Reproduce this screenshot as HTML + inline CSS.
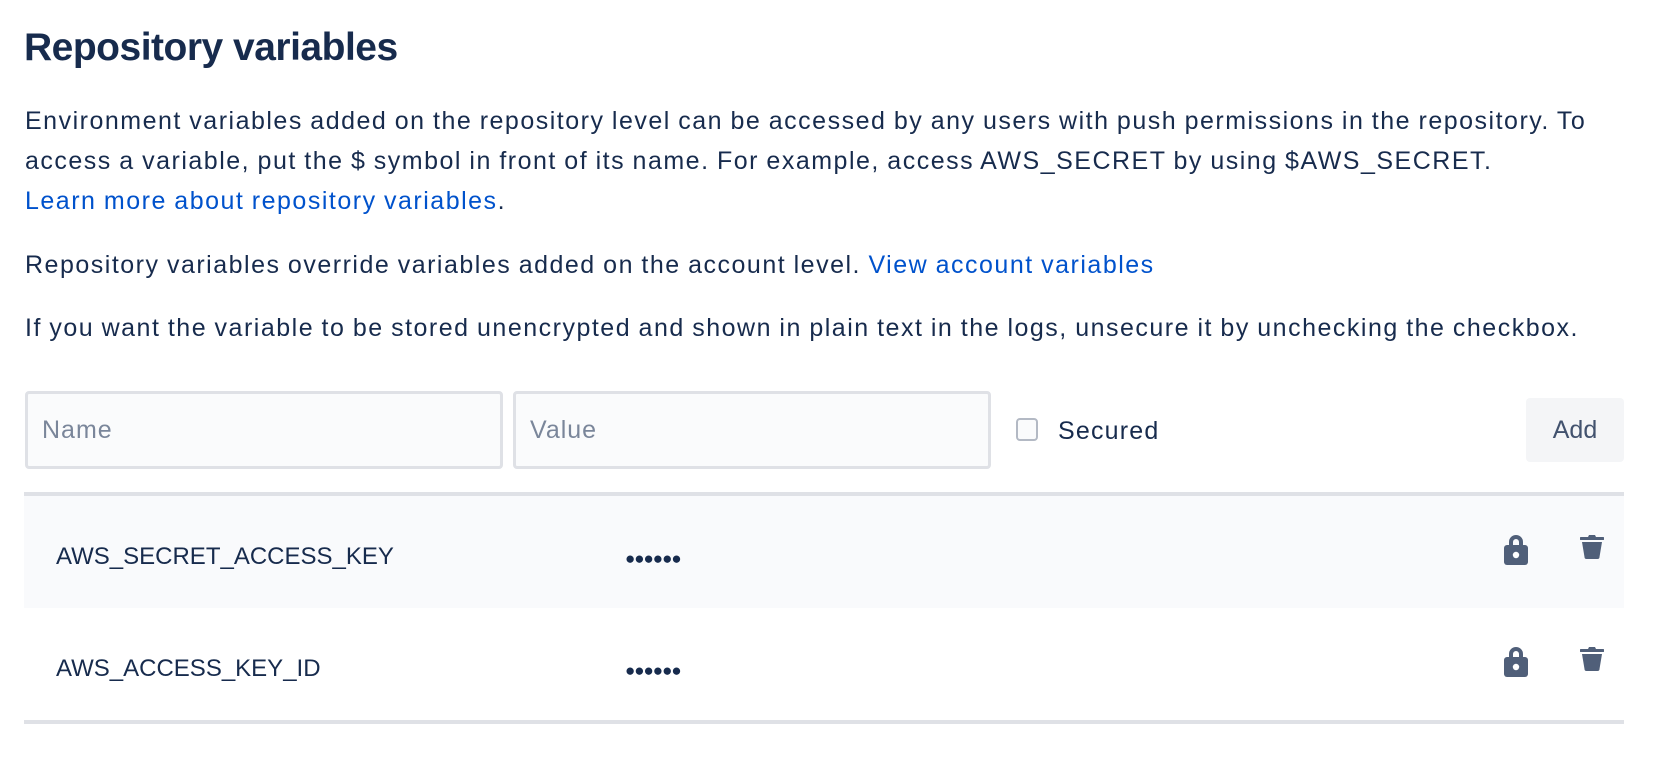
<!DOCTYPE html>
<html><head><meta charset="utf-8"><style>
*{margin:0;padding:0;box-sizing:border-box}
body{width:1668px;height:764px;background:#fff;font-family:"Liberation Sans",sans-serif;color:#172b4d;position:relative;overflow:hidden}
.a{position:absolute;white-space:nowrap}
h1{position:absolute;left:24px;top:24px;font-size:39px;font-weight:bold;line-height:48px;letter-spacing:-0.5px}
p{position:absolute;left:25px;font-size:25px;line-height:40px;white-space:nowrap;letter-spacing:1.5px;word-spacing:-1px}
a{color:#0052cc;text-decoration:none}
.inp{position:absolute;top:391px;height:78px;border:3px solid #dfe1e6;border-radius:4px;background:#fafbfc;color:#7a869a;font-size:25px;padding-left:14px;line-height:72px;letter-spacing:1px}
.row{position:absolute;left:24px;width:1600px}
.nm{position:absolute;left:32px;font-size:24px}
.dots{position:absolute;left:601px;font-size:17px;letter-spacing:-1px}
</style></head><body>
<h1>Repository variables</h1>
<p style="top:101px">Environment variables added on the repository level can be accessed by any users with push permissions in the repository. To<br>access a variable, put the $ symbol in front of its name. For example, access AWS_SECRET by using $AWS_SECRET.<br><a>Learn more about repository variables</a>.</p>
<p style="top:245px">Repository variables override variables added on the account level. <a>View account variables</a></p>
<p style="top:308px">If you want the variable to be stored unencrypted and shown in plain text in the logs, unsecure it by unchecking the checkbox.</p>
<div class="inp" style="left:25px;width:478px">Name</div>
<div class="inp" style="left:513px;width:478px">Value</div>
<div class="a" style="left:1016px;top:418px;width:22px;height:23px;border:2px solid #b3b9c4;border-radius:4px;background:#fafbfc"></div>
<div class="a" style="left:1058px;top:417px;font-size:25px;letter-spacing:1.2px">Secured</div>
<div class="a" style="left:1526px;top:398px;width:98px;height:64px;background:#f4f5f7;border-radius:4px;color:#42526e;font-size:25px;text-align:center;line-height:64px">Add</div>
<div class="row" style="top:492px;height:4px;background:#dfe1e6"></div>
<div class="row" style="top:496px;height:112px;background:#f9fafc">
<div class="nm" style="top:47px">AWS_SECRET_ACCESS_KEY</div>
<div class="dots" style="top:53px">●●●●●●</div>
</div>
<div class="row" style="top:608px;height:112px">
<div class="nm" style="top:47px">AWS_ACCESS_KEY_ID</div>
<div class="dots" style="top:53px">●●●●●●</div>
</div>
<div class="row" style="top:720px;height:4px;background:#dfe1e6"></div>
<svg class="a" style="left:1504px;top:533px" width="24" height="32" viewBox="0 0 24 32"><path d="M5 13V9a7 7 0 0 1 14 0v4h-4V9a3 3 0 0 0-6 0v4z" fill="#505f79"/><rect x="0" y="12" width="24" height="20" rx="3" fill="#505f79"/><circle cx="12" cy="22" r="3.2" fill="#fff"/></svg>
<svg class="a" style="left:1504px;top:645px" width="24" height="32" viewBox="0 0 24 32"><path d="M5 13V9a7 7 0 0 1 14 0v4h-4V9a3 3 0 0 0-6 0v4z" fill="#505f79"/><rect x="0" y="12" width="24" height="20" rx="3" fill="#505f79"/><circle cx="12" cy="22" r="3.2" fill="#fff"/></svg>
<svg class="a" style="left:1580px;top:535px" width="24" height="24" viewBox="0 0 24 24"><path d="M9 0h6l1 2h7a1 1 0 0 1 0 3H1a1 1 0 0 1 0-3h7z" fill="#505f79"/><path d="M2 7h20l-2.5 15a2 2 0 0 1-2 2h-11a2 2 0 0 1-2-2z" fill="#505f79"/></svg>
<svg class="a" style="left:1580px;top:647px" width="24" height="24" viewBox="0 0 24 24"><path d="M9 0h6l1 2h7a1 1 0 0 1 0 3H1a1 1 0 0 1 0-3h7z" fill="#505f79"/><path d="M2 7h20l-2.5 15a2 2 0 0 1-2 2h-11a2 2 0 0 1-2-2z" fill="#505f79"/></svg>
</body></html>
